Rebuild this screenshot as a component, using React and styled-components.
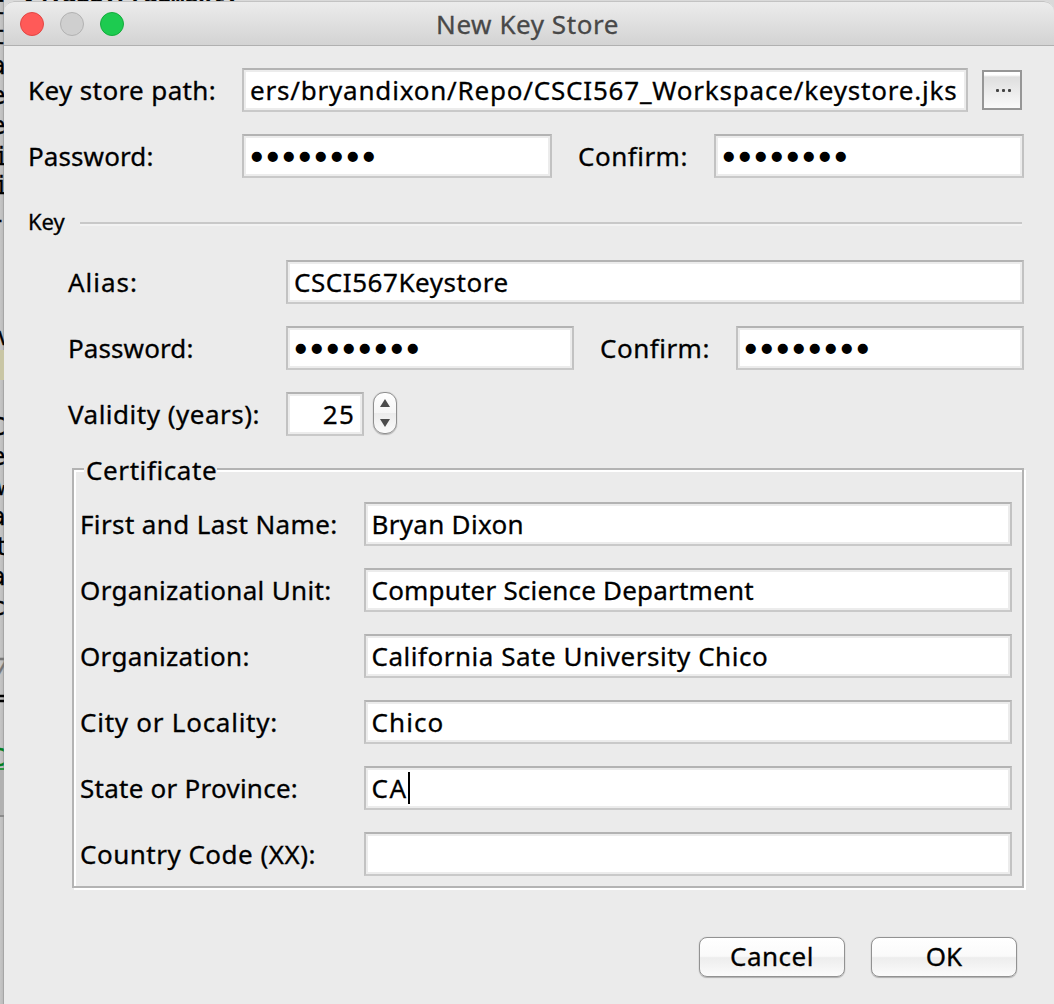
import React from 'react';
import styled, { createGlobalStyle } from 'styled-components';

const GlobalStyle = createGlobalStyle`
  * { box-sizing: border-box; }
  body { margin: 0; background: #ebebeb; overflow: hidden; }
`;

const Screen = styled.main`
  position: relative;
  display: flex;
  width: 1054px;
  height: 1004px;
  overflow: hidden;
  background: #d9d9d9;
  color: #000;
  font-family: 'Noto Sans', 'Open Sans', sans-serif;
  font-size: 26px;
  line-height: 36px;
  white-space: nowrap;
  -webkit-text-stroke: 0.3px currentColor;
`;

const Tail = styled.div`
  position: absolute;
  left: 22px;
  top: -17px;
  height: 24px;
  font: bold 22.5px/24px 'DejaVu Sans Mono', monospace;
`;

const Gutter = styled.div`
  position: relative;
  flex: none;
  width: 4px;
  height: 1004px;
  overflow: hidden;
  background: linear-gradient(90deg, #c6c6c6, #bcbcbc 70%, #969696);
`;

const Glyph = styled.span`
  position: absolute;
  left: ${(p) => p.$x ?? -9}px;
  top: ${(p) => p.$y - 21}px;
  color: ${(p) => p.$color || '#000'};
  font: ${(p) => (p.$italic ? 'italic' : 'normal')} 24px/30px 'DejaVu Sans Mono', monospace;
`;

const Band = styled.i`
  position: absolute;
  left: 0;
  top: ${(p) => p.$y}px;
  width: 4px;
  height: ${(p) => p.$h}px;
  background: ${(p) => p.$color};
`;

const Dialog = styled.section`
  position: relative;
  z-index: 1;
  flex: 1;
  height: 1003px;
  margin-top: 1px;
  display: flex;
  flex-direction: column;
  border-radius: 10px 10px 0 0;
  background: #ebebeb;
  overflow: hidden;
`;

const TitleBar = styled.header`
  flex: none;
  display: grid;
  grid-template-columns: 120px 1fr 123px;
  align-items: center;
  height: 45px;
  border-top: 1px solid #c3c3c3;
  border-bottom: 1px solid #b0b0b0;
  border-radius: 10px 10px 0 0;
  background: linear-gradient(#ececec, #d3d3d3);
`;

const Lights = styled.div`
  display: flex;
  gap: 16px;
  padding-left: 16px;
`;

const Light = styled.span`
  width: 24px;
  height: 24px;
  border-radius: 50%;
  border: 1px solid ${(p) => p.$edge};
  background: ${(p) => p.$fill};
`;

const Title = styled.h1`
  margin: 0;
  color: #484848;
  font-size: 26px;
  font-weight: 400;
  line-height: 36px;
  letter-spacing: 0.55px;
  text-align: center;
`;

const Form = styled.div`
  display: flex;
  flex-direction: column;
  gap: 22px;
  padding: 22px 30px 0 24px;
`;

const Row = styled.div`
  display: grid;
  grid-template-columns: ${(p) => p.$cols};
  align-items: center;
  height: 44px;
`;

const Label = styled.label`
  letter-spacing: ${(p) => p.$track ?? 0.5}px;
  padding-left: ${(p) => p.$indent ?? 0}px;
`;

const Field = styled.div`
  display: flex;
  align-items: center;
  justify-content: ${(p) => (p.$end ? 'flex-end' : 'flex-start')};
  height: 44px;
  min-width: 0;
  padding: 0 ${(p) => (p.$end ? 7 : 4)}px 0 ${(p) => p.$pad ?? 5.5}px;
  border: 2px solid #c2c2c2;
  border-top-color: #b3b3b3;
  border-bottom-color: #c9c9c9;
  background: #fff;
  box-shadow: inset 0 0 0 2px #ececec, inset 0 2px 0 #e2e2e2;
  letter-spacing: ${(p) => p.$track ?? 0.5}px;
  overflow: hidden;
`;

const Dots = styled.span`
  margin-left: -1px;
  padding-top: 4px;
  font: 28px/30px 'DejaVu Sans', sans-serif;
  letter-spacing: -0.5px;
  -webkit-text-stroke: 2px #000;
`;

const Caret = styled.i`
  width: 2px;
  height: 32px;
  margin-left: 0;
  background: #000;
`;

const Browse = styled.button`
  display: flex;
  align-items: center;
  justify-content: center;
  gap: 3px;
  width: 40px;
  height: 40px;
  margin-left: 14px;
  padding: 0 0 0 2px;
  border: 2px solid #969696;
  background: linear-gradient(#fff 0 8%, #dedede 14%, #fafafa);
`;

const Speck = styled.i`
  width: 3px;
  height: 3px;
  border-radius: 1px;
  background: #444;
`;

const Separator = styled.div`
  display: flex;
  align-items: center;
  gap: 15px;
  height: 38px;
  margin-right: 2px;
  padding-top: 4px;
  font-size: 22px;

  &::after {
    content: '';
    flex: 1;
    height: 0;
    margin-top: 6px;
    border-top: 2px solid #c8c8c8;
    border-bottom: 2px solid #f2f2f2;
  }
`;

const KeySection = styled.div`
  display: flex;
  flex-direction: column;
  gap: 22px;
  padding-left: 40px;
`;

const Stepper = styled.div`
  display: flex;
  flex-direction: column;
  align-items: center;
  justify-content: center;
  gap: 12px;
  width: 24px;
  height: 42px;
  margin: -2px 0 0 9px;
  border: 1.5px solid #8f8f8f;
  border-radius: 11px;
  background: linear-gradient(#fff, #f6f6f6 50%, #ececec 51%, #fbfbfb);
  box-shadow: 0 1px 1px #b4b4b4, 0 0 1px #a8a8a8;
`;

const Arrow = styled.i`
  border: 5px solid transparent;
  border-top: ${(p) => (p.$down ? '8px solid #4c4c4c' : '0')};
  border-bottom: ${(p) => (p.$down ? '0' : '8px solid #4c4c4c')};
`;

const Group = styled.fieldset`
  display: flex;
  flex-direction: column;
  gap: 22px;
  height: 420px;
  min-width: 0;
  margin: 10px 0 0 4px;
  padding: 32px 10px 0 5px;
  border: 2px solid #b3b3b3;
  box-shadow: 2px 2px 0 #fff, inset 2px 2px 0 #fff;
`;

const Legend = styled.span`
  align-self: flex-start;
  height: 36px;
  margin: -50px 0 -8px 5px;
  padding: 0 0 0 2px;
  background: #ebebeb;
  letter-spacing: 0.6px;
`;

const Actions = styled.footer`
  display: flex;
  justify-content: flex-end;
  gap: 26px;
  padding: 49px 37px 0 0;
`;

const Push = styled.button`
  width: 146px;
  height: 40px;
  padding: 0 0 2px;
  border: 1.5px solid #929292;
  border-radius: 8px;
  background: linear-gradient(#fff, #fafafa 48%, #ededed 52%, #fbfbfb);
  box-shadow: 0 1px 1px #b0b0b0, 0 0 1px #b0b0b0;
  color: #000;
  font: 26px/36px 'Noto Sans', sans-serif;
  letter-spacing: ${(p) => p.$track}px;
  -webkit-text-stroke: 0.3px currentColor;
`;

const glyphs = [
  ['t', 12], ['t', 42], ['a', 72], ['e', 102], ['e', 132], ['i', 163, -6], ['i', 192, -6], ['-', 226],
  ['v', 343, -3], ['C', 433], ['e', 463], ['w', 493, -3], ['a', 523], ['t', 553, -6], ['a', 583], ['c', 613],
];

const certificate = [
  ['First and Last Name:', 0.38, 'Bryan Dixon', 0.3],
  ['Organizational Unit:', 0.32, 'Computer Science Department', 0.2],
  ['Organization:', 0.3, 'California Sate University Chico', 0.52],
  ['City or Locality:', 0.75, 'Chico', 1.1],
  ['State or Province:', 0.25, 'CA', 1.5],
  ['Country Code (XX):', 0.5, '', 0],
];

const Password = () => <Dots>••••••••</Dots>;

export default function App() {
  return (
    <Screen>
      <GlobalStyle />
      <Tail>v4.app.Fragment;</Tail>
      <Gutter>
        <Band $y={350} $h={30} $color="#c9c6a5" />
        {glyphs.map(([c, y, x]) => (
          <Glyph key={y} $y={y} $x={x}>{c}</Glyph>
        ))}
        <Glyph $y={674} $x={-6} $italic $color="#777">7</Glyph>
        <Glyph $y={704}>=</Glyph>
        <Glyph $y={764} $color="#008020">C</Glyph>
        <Band $y={770} $h={46} $color="#b1b1b1" />
        <Band $y={768} $h={2} $color="#2b9440" />
        <Band $y={815} $h={2} $color="#8b8b8b" />
      </Gutter>
      <Dialog>
        <TitleBar>
          <Lights>
            <Light $fill="#ff5a58" $edge="#e24644" />
            <Light $fill="#cfcfcf" $edge="#b2b2b2" />
            <Light $fill="#1dcb50" $edge="#14ac3c" />
          </Lights>
          <Title>New Key Store</Title>
        </TitleBar>
        <Form>
          <Row $cols="214px 726px 54px">
            <Label $track={0.38}>Key store path:</Label>
            <Field $track={0.8} $pad={6}>ers/bryandixon/Repo/CSCI567_Workspace/keystore.jks</Field>
            <Browse><Speck /><Speck /><Speck /></Browse>
          </Row>
          <Row $cols="214px 310px 162px 310px">
            <Label $track={0.1}>Password:</Label>
            <Field><Password /></Field>
            <Label $indent={26} $track={0.5}>Confirm:</Label>
            <Field><Password /></Field>
          </Row>
          <Separator>Key</Separator>
          <KeySection>
            <Row $cols="218px 738px">
              <Label $track={1}>Alias:</Label>
              <Field $track={0.55} $pad={6}>CSCI567Keystore</Field>
            </Row>
            <Row $cols="218px 288px 162px 288px">
              <Label $track={0.1}>Password:</Label>
              <Field><Password /></Field>
              <Label $indent={26} $track={0.5}>Confirm:</Label>
              <Field><Password /></Field>
            </Row>
            <Row $cols="218px 78px 40px">
              <Label $track={0.5}>Validity (years):</Label>
              <Field $end $track={1.2}>25</Field>
              <Stepper><Arrow /><Arrow $down /></Stepper>
            </Row>
            <Group>
              <Legend>Certificate</Legend>
              {certificate.map(([label, lt, value, vt]) => (
                <Row key={label} $cols="285px 648px">
                  <Label $track={lt} $indent={1}>{label}</Label>
                  <Field $track={vt}>{value}{value === 'CA' && <Caret />}</Field>
                </Row>
              ))}
            </Group>
          </KeySection>
        </Form>
        <Actions>
          <Push $track={0.5}>Cancel</Push>
          <Push $track={0}>OK</Push>
        </Actions>
      </Dialog>
    </Screen>
  );
}
